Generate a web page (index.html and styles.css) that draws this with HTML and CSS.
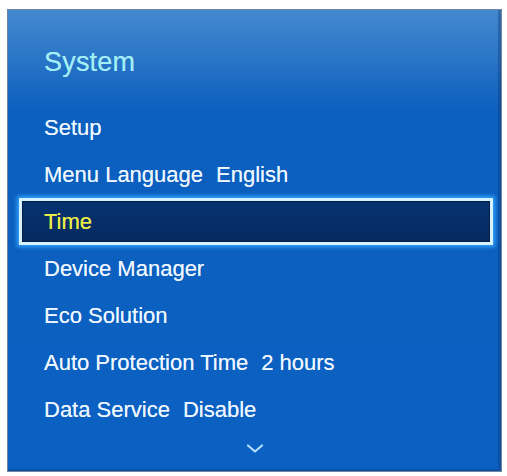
FILE: index.html
```html
<!DOCTYPE html>
<html lang="en">
<head>
<meta charset="utf-8">
<title>System</title>
<link rel="stylesheet" href="styles.css">
</head>
<body>
<div class="panel">
  <h1 class="title">System</h1>
  <ul class="menu">
    <li class="item"><span class="label">Setup</span></li>
    <li class="item"><span class="label">Menu Language</span><span class="value">English</span></li>
    <li class="item selected"><span class="label">Time</span></li>
    <li class="item"><span class="label">Device Manager</span></li>
    <li class="item"><span class="label">Eco Solution</span></li>
    <li class="item"><span class="label">Auto Protection Time</span><span class="value">2 hours</span></li>
    <li class="item"><span class="label">Data Service</span><span class="value">Disable</span></li>
  </ul>
  <div class="more">
    <svg width="18" height="11" viewBox="0 0 18 11"><polyline points="2,2.5 9,8.5 16,2.5" fill="none" stroke="#b3ddff" stroke-width="2.2" stroke-linecap="round" stroke-linejoin="round"/></svg>
  </div>
</div>
</body>
</html>
```
FILE: styles.css
```css
html, body {
  margin: 0;
  padding: 0;
  background: #ffffff;
}
body {
  padding: 9px 5px 0 7px;
  font-family: "Liberation Sans", Arial, sans-serif;
}
.panel {
  box-sizing: border-box;
  width: 495px;
  height: 463px;
  border: 1px solid #6f86a3;
  background: linear-gradient(to bottom, #4389cf 0px, #2f79c9 40px, #1465c0 85px, #0b5fbe 105px, #0b61c2 100%);
  box-shadow: inset -3px -2px 0 rgba(20, 50, 100, 0.35);
  display: flex;
  flex-direction: column;
}
.title {
  margin: 37px 0 0 36px;
  font-size: 27px;
  line-height: 30px;
  font-weight: normal;
  color: #a2eef4;
  letter-spacing: 0.2px;
  text-shadow: 0 0 0.6px rgba(162, 238, 244, 0.8);
}
.menu {
  list-style: none;
  margin: 27px 8px 0 11px;
  padding: 0;
}
.item {
  box-sizing: border-box;
  height: 47px;
  display: flex;
  align-items: center;
  padding-left: 25px;
  font-size: 22px;
  line-height: 24px;
  color: #eef6ff;
  text-shadow: 0 0 0.6px rgba(238, 246, 255, 0.8);
}
.item .value {
  margin-left: 13px;
}
.item.selected {
  padding-left: 22px;
  border: 3px solid #d6f1ff;
  background: linear-gradient(to bottom, #073372, #062a60);
  box-shadow: 0 0 4px 2px #35a4ff, inset 0 0 0 1px #021d44;
  color: #eded45;
  text-shadow: 0 0 0.6px rgba(237, 237, 69, 0.8);
}
.more {
  margin-top: 10px;
  display: flex;
  justify-content: center;
}
.more svg {
  display: block;
}
```
